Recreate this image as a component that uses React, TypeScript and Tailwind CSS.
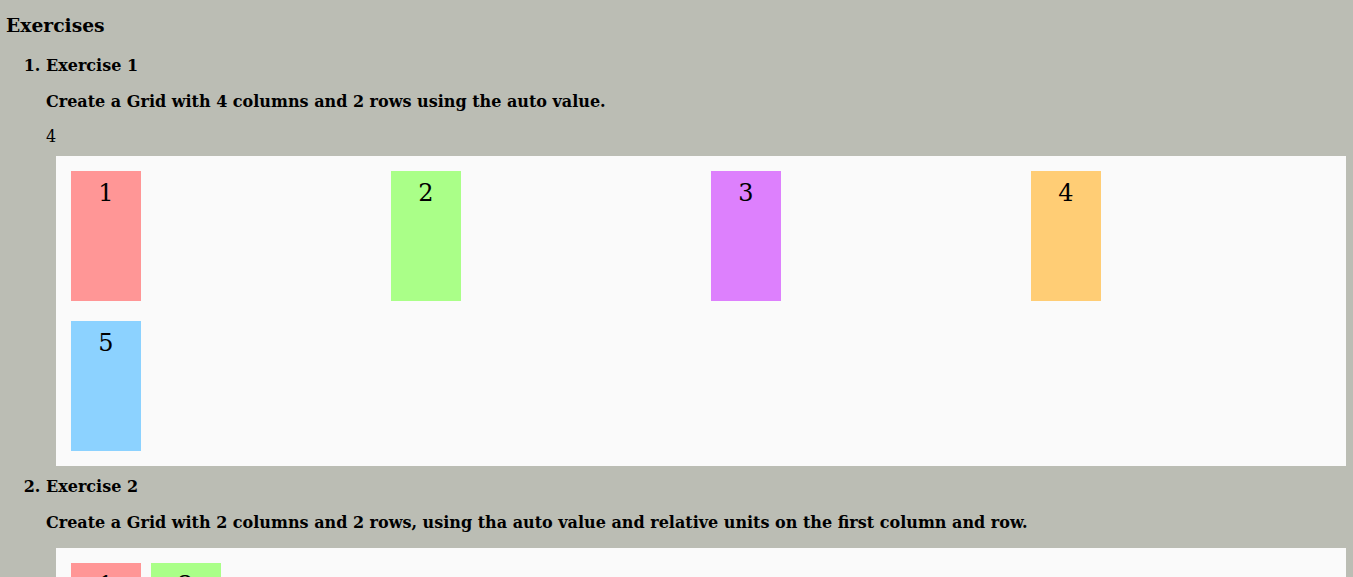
const exerciseOne = [
  { n: 1, color: 'bg-[#ff9696]' },
  { n: 2, color: 'bg-[#aaff88]' },
  { n: 3, color: 'bg-[#dd80fd]' },
  { n: 4, color: 'bg-[#ffcd75]' },
  { n: 5, color: 'bg-[#8cd2ff]' },
];

function Box({ n, color }: { n: number; color: string }) {
  return (
    <div className={`${color} w-[70px] h-[130px] text-center text-[24px] leading-[28px] pt-[8px] font-normal`}>
      {n}
    </div>
  );
}

export default function App() {
  return (
    <div className="min-h-screen bg-[#bbbdb4] text-black font-['DejaVu_Serif',serif] px-[8px] pt-[14px] pb-[20px] overflow-hidden">
      <h3 className="text-[18.72px] leading-[22px] font-bold -ml-[2px]">Exercises</h3>
      <ol className="list-decimal pl-[38px] mt-[20px] font-bold text-[16px] leading-[19px]">
        <li>
          <h4>Exercise 1</h4>
          <p className="mt-[17px]">Create a Grid with 4 columns and 2 rows using the auto value.</p>
          <p className="mt-[16px] font-normal">4</p>
          <div className="mt-[10px] ml-[10px] -mr-[1px] bg-[#fafafa] p-[15px] grid grid-cols-[repeat(4,300px)] gap-[20px]">
            {exerciseOne.map((b) => (
              <Box key={b.n} n={b.n} color={b.color} />
            ))}
          </div>
        </li>
        <li className="mt-[11px]">
          <h4>Exercise 2</h4>
          <p className="mt-[17px]">
            Create a Grid with 2 columns and 2 rows, using tha auto value and relative units on the first column and row.
          </p>
          <div className="mt-[16px] ml-[10px] -mr-[1px] bg-[#fafafa] p-[15px] grid grid-cols-[70px_70px] gap-[10px]">
            <Box n={1} color="bg-[#ff9696]" />
            <Box n={2} color="bg-[#aaff88]" />
            <Box n={3} color="bg-[#dd80fd]" />
            <Box n={4} color="bg-[#ffcd75]" />
          </div>
        </li>
      </ol>
    </div>
  );
}
